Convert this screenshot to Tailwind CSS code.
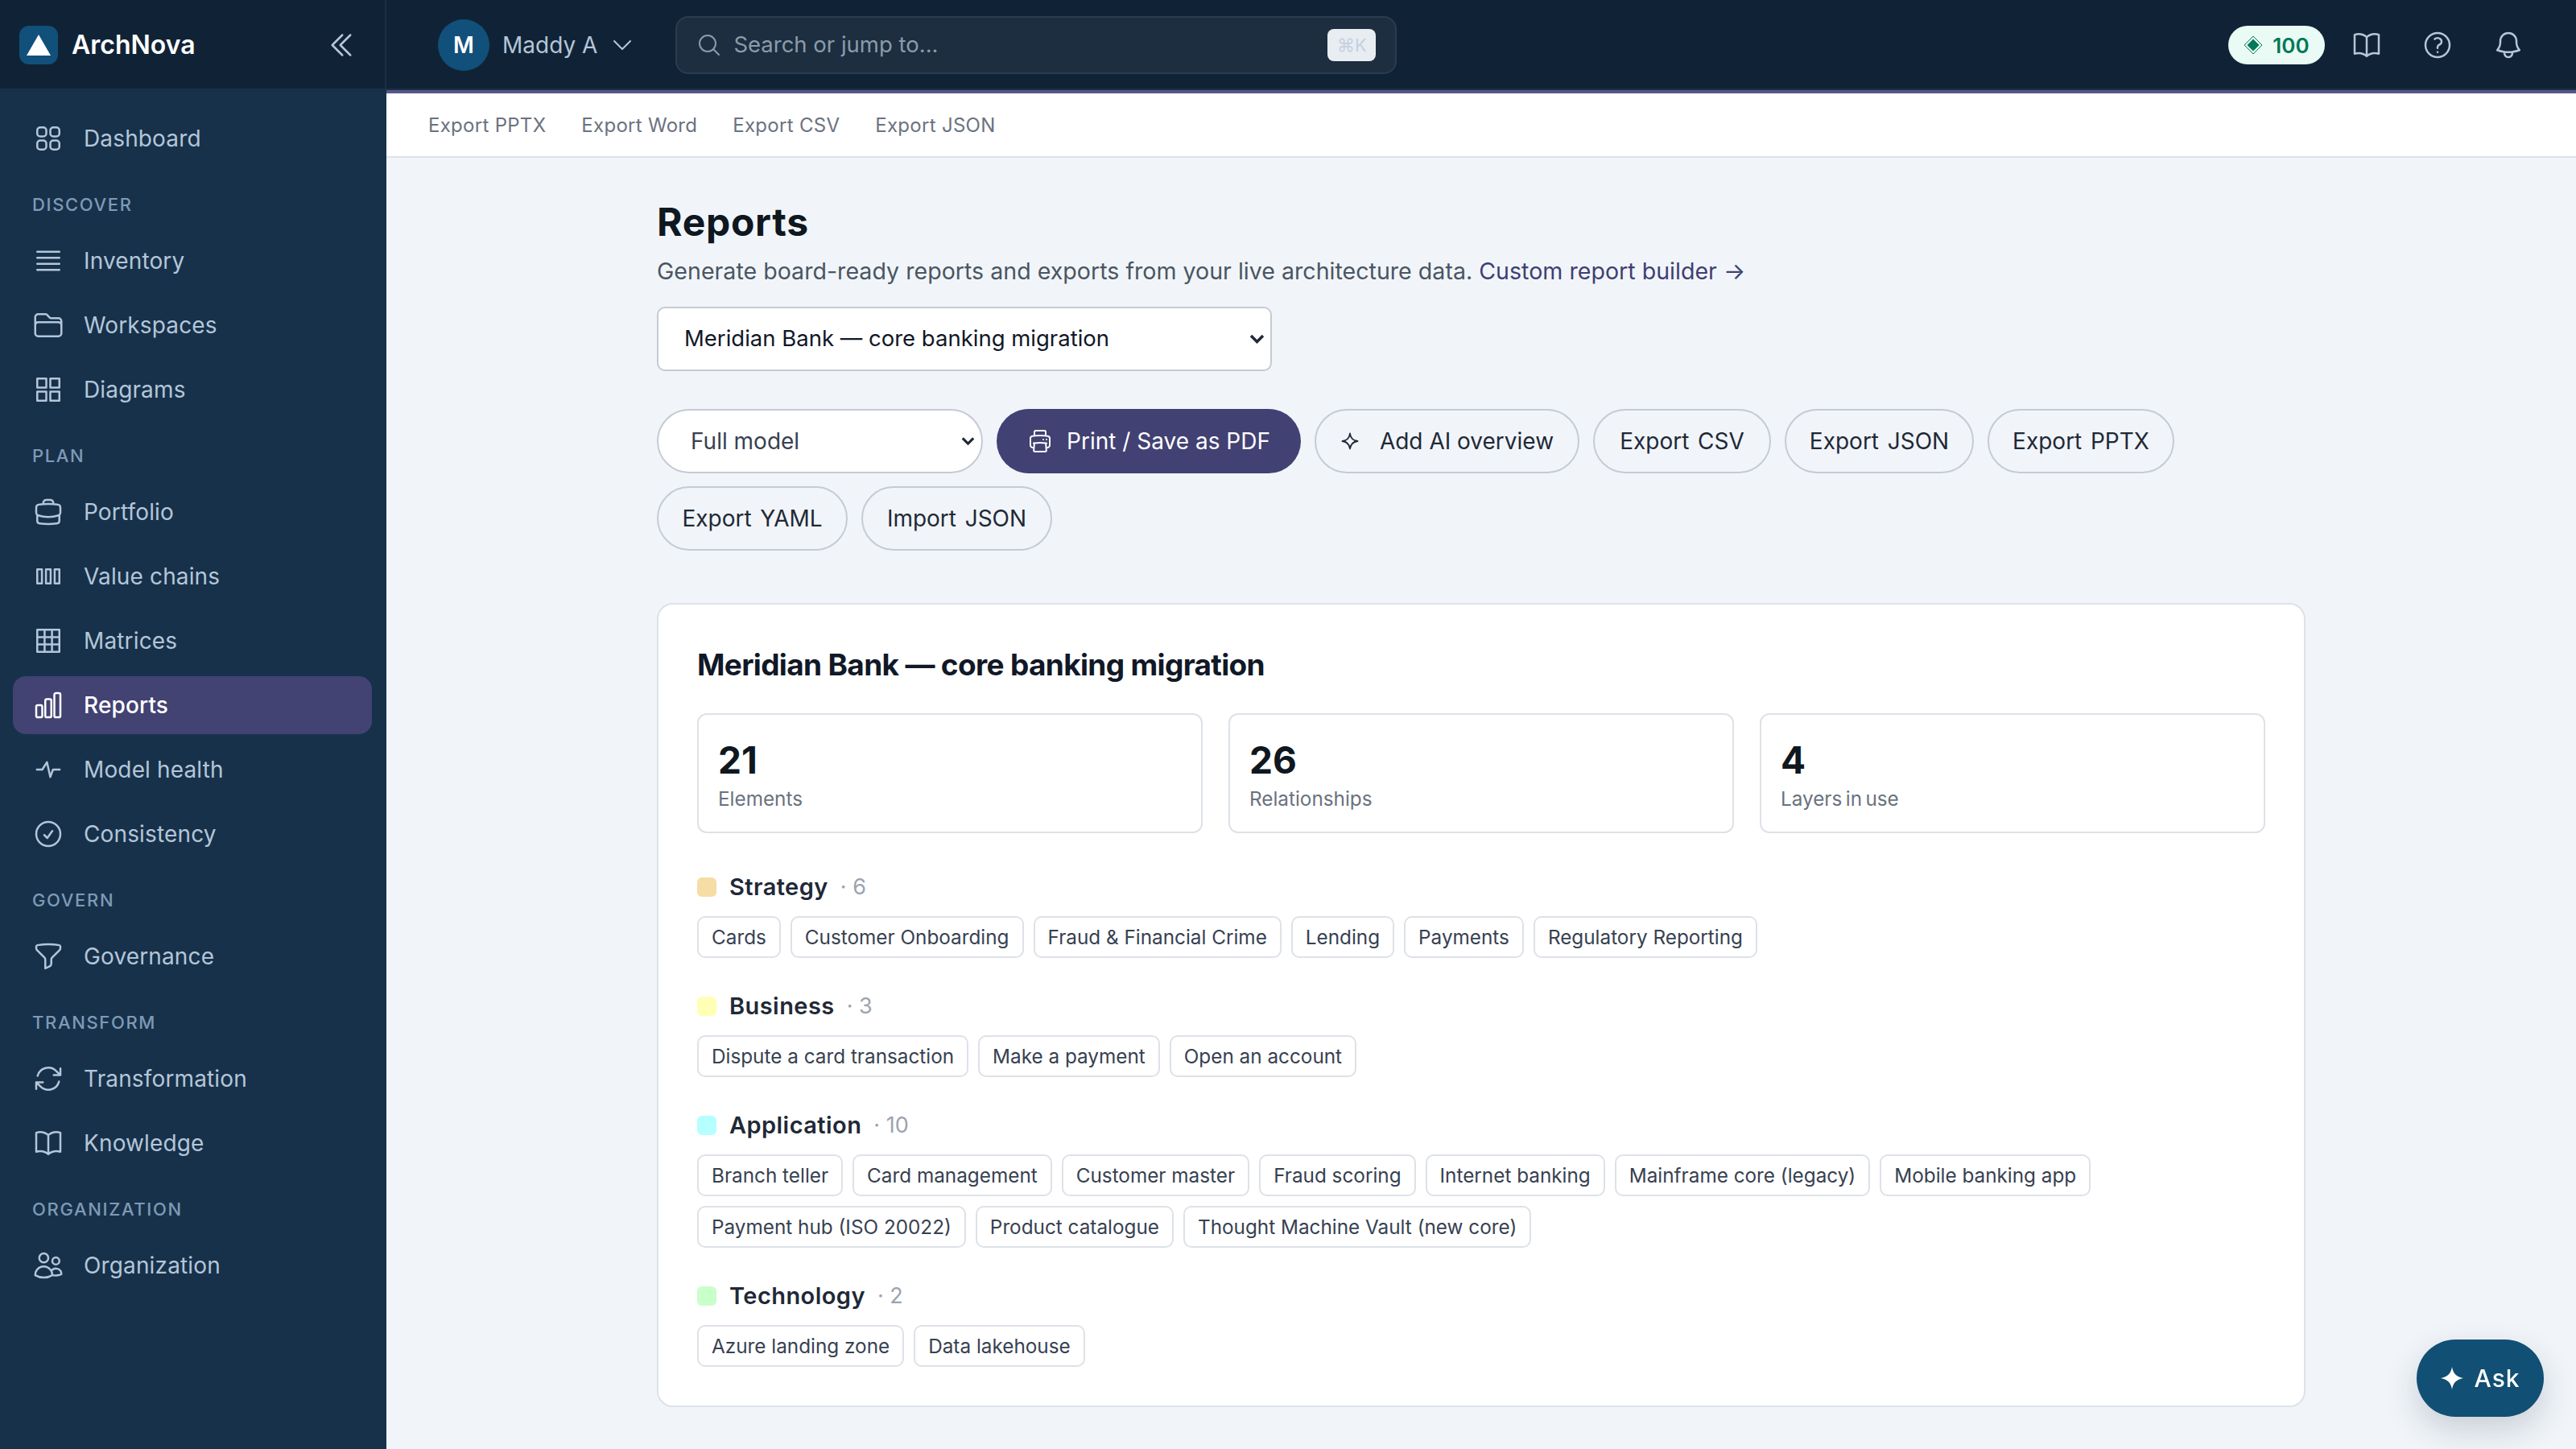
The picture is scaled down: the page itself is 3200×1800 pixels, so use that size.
<!DOCTYPE html>
<html lang="en">
	<head>
		<meta charset="UTF-8" />
		<meta name="viewport" content="width=device-width, initial-scale=1.0" />
		<title>ArchNova - Reports</title>
		<script src="https://cdn.jsdelivr.net/npm/@tailwindcss/browser@4"></script>
	</head>
	<body class="flex h-screen w-full overflow-hidden bg-[#f1f5f9] font-['Inter',sans-serif] text-[#111827]">
		<!-- Sidebar -->
		<aside class="flex h-full w-[480px] shrink-0 flex-col bg-[#17314b]">
			<div class="flex h-[112px] shrink-0 items-center border-r-2 border-b-2 border-[#1c3045] bg-[#102336] pt-0.5 pr-[34px] pl-6">
				<div class="flex size-12 items-center justify-center rounded-xl bg-[#11507a]">
					<svg class="h-[26px] w-[30px]" viewBox="0 0 30 26"><path fill="#fff" d="M15 0 30 26H0Z" /></svg>
				</div>
				<span class="ml-[17px] flex-1 text-[32px] font-semibold text-white">ArchNova</span>
				<svg class="size-10 text-[#b4c6d8]" fill="none" viewBox="0 0 24 24" stroke-width="1.5" stroke="currentColor"><path stroke-linecap="round" stroke-linejoin="round" d="m18.75 4.5-7.5 7.5 7.5 7.5m-6-15L5.25 12l7.5 7.5" /></svg>
			</div>
			<nav class="flex flex-col gap-2 pt-6 pr-[18px] pl-4 text-[28px] tracking-[0.005em] text-[#b4c6d8]">
				<a class="flex h-[72px] items-center gap-6 px-6">
					<svg class="size-10 shrink-0" fill="none" viewBox="0 0 24 24" stroke-width="1.5" stroke="currentColor"><path stroke-linecap="round" stroke-linejoin="round" d="M3.75 6A2.25 2.25 0 0 1 6 3.75h2.25A2.25 2.25 0 0 1 10.5 6v2.25a2.25 2.25 0 0 1-2.25 2.25H6a2.25 2.25 0 0 1-2.25-2.25V6ZM3.75 15.75A2.25 2.25 0 0 1 6 13.5h2.25a2.25 2.25 0 0 1 2.25 2.25V18a2.25 2.25 0 0 1-2.25 2.25H6A2.25 2.25 0 0 1 3.75 18v-2.25ZM13.5 6a2.25 2.25 0 0 1 2.25-2.25H18A2.25 2.25 0 0 1 20.25 6v2.25A2.25 2.25 0 0 1 18 10.5h-2.25a2.25 2.25 0 0 1-2.25-2.25V6ZM13.5 15.75a2.25 2.25 0 0 1 2.25-2.25H18a2.25 2.25 0 0 1 2.25 2.25V18A2.25 2.25 0 0 1 18 20.25h-2.25A2.25 2.25 0 0 1 13.5 18v-2.25Z" /></svg>
					Dashboard
				</a>
				<div class="px-6 pt-[22px] pb-[9px] text-[22px] leading-[33px] font-medium tracking-[0.075em] text-[#7f9ab5]">DISCOVER</div>
				<a class="flex h-[72px] items-center gap-6 px-6">
					<svg class="size-10 shrink-0" fill="none" viewBox="0 0 24 24" stroke-width="1.5" stroke="currentColor"><path stroke-linecap="round" stroke-linejoin="round" d="M3.75 5.25h16.5m-16.5 4.5h16.5m-16.5 4.5h16.5m-16.5 4.5h16.5" /></svg>
					Inventory
				</a>
				<a class="flex h-[72px] items-center gap-6 px-6">
					<svg class="size-10 shrink-0" fill="none" viewBox="0 0 24 24" stroke-width="1.5" stroke="currentColor"><path stroke-linecap="round" stroke-linejoin="round" d="M2.25 12.75V12A2.25 2.25 0 0 1 4.5 9.75h15A2.25 2.25 0 0 1 21.75 12v.75m-8.69-6.44-2.12-2.12a1.5 1.5 0 0 0-1.061-.44H4.5A2.25 2.25 0 0 0 2.25 6v12a2.25 2.25 0 0 0 2.25 2.25h15A2.25 2.25 0 0 0 21.75 18V9a2.25 2.25 0 0 0-2.25-2.25h-5.379a1.5 1.5 0 0 1-1.06-.44Z" /></svg>
					Workspaces
				</a>
				<a class="flex h-[72px] items-center gap-6 px-6">
					<svg class="size-10 shrink-0" fill="none" viewBox="0 0 24 24" stroke-width="1.5" stroke="currentColor"><path stroke-linejoin="round" d="M3.75 3.75h6.75v6.75H3.75ZM13.5 3.750h6.75v6.75H13.5ZM3.75 13.5h6.75v6.75H3.75ZM13.5 13.5h6.75v6.75H13.5Z" /></svg>
					Diagrams
				</a>
				<div class="px-6 pt-[22px] pb-[9px] text-[22px] leading-[33px] font-medium tracking-[0.075em] text-[#7f9ab5]">PLAN</div>
				<a class="flex h-[72px] items-center gap-6 px-6">
					<svg class="size-10 shrink-0" fill="none" viewBox="0 0 24 24" stroke-width="1.5" stroke="currentColor"><path stroke-linecap="round" stroke-linejoin="round" d="M20.25 14.15v4.25c0 1.094-.787 2.036-1.872 2.18-2.087.277-4.216.42-6.378.42s-4.291-.143-6.378-.42c-1.085-.144-1.872-1.086-1.872-2.18v-4.25m16.5 0a2.18 2.18 0 0 0 .75-1.661V8.706c0-1.081-.768-2.015-1.837-2.175a48.114 48.114 0 0 0-3.413-.387m4.5 8.006c-.194.165-.42.295-.673.38A23.978 23.978 0 0 1 12 15.75c-2.648 0-5.195-.429-7.577-1.22a2.016 2.016 0 0 1-.673-.38m0 0A2.18 2.18 0 0 1 3 12.489V8.706c0-1.081.768-2.015 1.837-2.175a48.111 48.111 0 0 1 3.413-.387m7.5 0V5.25A2.25 2.25 0 0 0 13.5 3h-3a2.25 2.25 0 0 0-2.25 2.25v.894m7.5 0a48.667 48.667 0 0 0-7.5 0" /></svg>
					Portfolio
				</a>
				<a class="flex h-[72px] items-center gap-6 px-6">
					<svg class="size-10 shrink-0" fill="none" viewBox="0 0 24 24" stroke-width="1.5" stroke="currentColor"><path stroke-linejoin="round" d="M3.75 6.75h3.5v10.5h-3.5ZM10.25 6.75h3.5v10.5h-3.5ZM16.75 6.75h3.5v10.5h-3.5Z" /></svg>
					Value chains
				</a>
				<a class="flex h-[72px] items-center gap-6 px-6">
					<svg class="size-10 shrink-0" fill="none" viewBox="0 0 24 24" stroke-width="1.5" stroke="currentColor"><path stroke-linejoin="round" d="M3.75 3.75h16.5v16.5H3.75ZM3.75 9.25h16.5M3.75 14.75h16.5M9.25 3.75v16.5M14.75 3.75v16.5" /></svg>
					Matrices
				</a>
				<a class="flex h-[72px] items-center gap-6 rounded-2xl bg-[#424273] px-6 font-medium text-white">
					<svg class="size-10 shrink-0" fill="none" viewBox="0 0 24 24" stroke-width="1.5" stroke="currentColor"><path stroke-linecap="round" stroke-linejoin="round" d="M3 13.125C3 12.504 3.504 12 4.125 12h2.25c.621 0 1.125.504 1.125 1.125v6.75C7.5 20.496 6.996 21 6.375 21h-2.25A1.125 1.125 0 0 1 3 19.875v-6.75ZM9.75 8.625c0-.621.504-1.125 1.125-1.125h2.25c.621 0 1.125.504 1.125 1.125v11.25c0 .621-.504 1.125-1.125 1.125h-2.25a1.125 1.125 0 0 1-1.125-1.125V8.625ZM16.5 4.125c0-.621.504-1.125 1.125-1.125h2.25C20.496 3 21 3.504 21 4.125v15.75c0 .621-.504 1.125-1.125 1.125h-2.25a1.125 1.125 0 0 1-1.125-1.125V4.125Z" /></svg>
					Reports
				</a>
				<a class="flex h-[72px] items-center gap-6 px-6">
					<svg class="size-10 shrink-0" fill="none" viewBox="0 0 24 24" stroke-width="1.5" stroke="currentColor"><path stroke-linecap="round" stroke-linejoin="round" d="M3.5 12h4L11 6.5l2.500 11 2-5.500h5" /></svg>
					Model health
				</a>
				<a class="flex h-[72px] items-center gap-6 px-6">
					<svg class="size-10 shrink-0" fill="none" viewBox="0 0 24 24" stroke-width="1.5" stroke="currentColor"><path stroke-linecap="round" stroke-linejoin="round" d="M9 12.75 11.25 15 15 9.75M21 12a9 9 0 1 1-18 0 9 9 0 0 1 18 0Z" /></svg>
					Consistency
				</a>
				<div class="px-6 pt-[22px] pb-[9px] text-[22px] leading-[33px] font-medium tracking-[0.075em] text-[#7f9ab5]">GOVERN</div>
				<a class="flex h-[72px] items-center gap-6 px-6">
					<svg class="size-10 shrink-0" fill="none" viewBox="0 0 24 24" stroke-width="1.5" stroke="currentColor"><path stroke-linecap="round" stroke-linejoin="round" d="M12 3c2.755 0 5.455.232 8.083.678.533.09.917.556.917 1.096v1.044a2.25 2.25 0 0 1-.659 1.591l-5.432 5.432a2.25 2.25 0 0 0-.659 1.591v2.927a2.25 2.25 0 0 1-1.244 2.013L9.75 21v-6.568a2.25 2.25 0 0 0-.659-1.591L3.659 7.409A2.25 2.25 0 0 1 3 5.818V4.774c0-.54.384-1.006.917-1.096A48.32 48.32 0 0 1 12 3Z" /></svg>
					Governance
				</a>
				<div class="px-6 pt-[22px] pb-[9px] text-[22px] leading-[33px] font-medium tracking-[0.075em] text-[#7f9ab5]">TRANSFORM</div>
				<a class="flex h-[72px] items-center gap-6 px-6">
					<svg class="size-10 shrink-0" fill="none" viewBox="0 0 24 24" stroke-width="1.5" stroke="currentColor"><path stroke-linecap="round" stroke-linejoin="round" d="M16.023 9.348h4.992v-.001M2.985 19.644v-4.992m0 0h4.992m-4.993 0 3.181 3.183a8.25 8.25 0 0 0 13.803-3.7M4.031 9.865a8.25 8.25 0 0 1 13.803-3.7l3.181 3.182m0-4.991v4.99" /></svg>
					Transformation
				</a>
				<a class="flex h-[72px] items-center gap-6 px-6">
					<svg class="size-10 shrink-0" fill="none" viewBox="0 0 24 24" stroke-width="1.5" stroke="currentColor"><path stroke-linecap="round" stroke-linejoin="round" d="M12 6.042A8.967 8.967 0 0 0 6 3.75c-1.052 0-2.062.18-3 .512v14.25A8.987 8.987 0 0 1 6 18c2.305 0 4.408.867 6 2.292m0-14.25a8.966 8.966 0 0 1 6-2.292c1.052 0 2.062.18 3 .512v14.25A8.987 8.987 0 0 0 18 18a8.967 8.967 0 0 0-6 2.292m0-14.25v14.25" /></svg>
					Knowledge
				</a>
				<div class="px-6 pt-[22px] pb-[9px] text-[22px] leading-[33px] font-medium tracking-[0.075em] text-[#7f9ab5]">ORGANIZATION</div>
				<a class="flex h-[72px] items-center gap-6 px-6">
					<svg class="size-10 shrink-0" fill="none" viewBox="0 0 24 24" stroke-width="1.5" stroke="currentColor"><path stroke-linecap="round" stroke-linejoin="round" d="M15 19.128a9.38 9.38 0 0 0 2.625.372 9.337 9.337 0 0 0 4.121-.952 4.125 4.125 0 0 0-7.533-2.493M15 19.128v-.003c0-1.113-.285-2.16-.786-3.07M15 19.128v.106A12.318 12.318 0 0 1 8.624 21c-2.331 0-4.512-.645-6.374-1.766l-.001-.109a6.375 6.375 0 0 1 11.964-3.07M12 6.375a3.375 3.375 0 1 1-6.75 0 3.375 3.375 0 0 1 6.75 0Zm8.25 2.25a2.625 2.625 0 1 1-5.25 0 2.625 2.625 0 0 1 5.25 0Z" /></svg>
					Organization
				</a>
			</nav>
		</aside>

		<div class="flex min-w-0 flex-1 flex-col">
			<!-- Top bar -->
			<header class="flex h-[116px] shrink-0 items-center border-b-4 border-[#57578a] bg-[#102336] pr-[64px] pl-16 shadow-[inset_0_-2px_0_#1c3045]">
				<div class="flex size-16 items-center justify-center rounded-full bg-[#11507a] text-[28px] font-semibold text-white">M</div>
				<span class="ml-4 text-[28px] text-[#b4c6d8]">Maddy A</span>
				<svg class="ml-[15px] size-8 text-[#b4c6d8]" fill="none" viewBox="0 0 24 24" stroke-width="1.5" stroke="currentColor"><path stroke-linecap="round" stroke-linejoin="round" d="m19.5 8.25-7.5 7.5-7.5-7.5" /></svg>
				<div class="ml-[50px] flex h-[72px] w-[896px] items-center rounded-2xl border-2 border-[#2a3c50] bg-[#1c2e40] pr-6 pl-6">
					<svg class="size-8 shrink-0 text-[#8b9bab]" fill="none" viewBox="0 0 24 24" stroke-width="1.5" stroke="currentColor"><path stroke-linecap="round" stroke-linejoin="round" d="m21 21-5.197-5.197m0 0A7.5 7.500 0 1 0 5.196 5.196a7.5 7.500 0 0 0 10.607 10.607Z" /></svg>
					<span class="ml-[14px] flex-1 text-[27.5px] text-[#8b9bab]">Search or jump to...</span>
					<span class="flex h-10 w-[60px] items-center justify-center rounded-lg bg-[#e8edf2] text-[22px] text-[#c3d1df]">⌘K</span>
				</div>
				<div class="ml-auto flex h-12 w-[120px] items-center justify-center gap-3 rounded-full bg-[#e9fbf4] text-[26px] font-semibold text-[#047857]">
					<svg class="size-6" viewBox="0 0 24 24"><path fill="none" stroke="currentColor" stroke-width="1" d="M12 1 23 12 12 23 1 12Z" /><path fill="currentColor" d="M12 4.5 19.5 12 12 19.5 4.5 12Z" /></svg>
					100
				</div>
				<div class="ml-[32px] flex items-center gap-[48px] text-[#b4c6d8]">
					<svg class="size-10" fill="none" viewBox="0 0 24 24" stroke-width="1.5" stroke="currentColor"><path stroke-linecap="round" stroke-linejoin="round" d="M12 6.042A8.967 8.967 0 0 0 6 3.75c-1.052 0-2.062.18-3 .512v14.25A8.987 8.987 0 0 1 6 18c2.305 0 4.408.867 6 2.292m0-14.25a8.966 8.966 0 0 1 6-2.292c1.052 0 2.062.18 3 .512v14.25A8.987 8.987 0 0 0 18 18a8.967 8.967 0 0 0-6 2.292m0-14.25v14.25" /></svg>
					<svg class="size-10" fill="none" viewBox="0 0 24 24" stroke-width="1.5" stroke="currentColor"><path stroke-linecap="round" stroke-linejoin="round" d="M9.879 7.519c1.171-1.025 3.071-1.025 4.242 0 1.172 1.025 1.172 2.687 0 3.712-.203.179-.43.326-.67.442-.745.361-1.45.999-1.45 1.827v.75M21 12a9 9 0 1 1-18 0 9 9 0 0 1 18 0Zm-9 5.25h.008v.008H12v-.008Z" /></svg>
					<svg class="size-10" fill="none" viewBox="0 0 24 24" stroke-width="1.5" stroke="currentColor"><path stroke-linecap="round" stroke-linejoin="round" d="M14.857 17.082a23.848 23.848 0 0 0 5.454-1.31A8.967 8.967 0 0 1 18 9.75V9A6 6 0 0 0 6 9v.75a8.967 8.967 0 0 1-2.312 6.022c1.733.64 3.56 1.085 5.455 1.31m5.714 0a24.255 24.255 0 0 1-5.714 0m5.714 0a3 3 0 1 1-5.714 0" /></svg>
				</div>
			</header>

			<!-- Sub nav -->
			<div class="flex h-[80px] shrink-0 items-center gap-[44px] border-b-2 border-[#dfe2e6] bg-white pt-0.5 pl-[52px] text-[24px] tracking-[0.012em] text-[#6b7280]">
				<a>Export PPTX</a>
				<a>Export Word</a>
				<a>Export CSV</a>
				<a>Export JSON</a>
			</div>

			<main class="min-h-0 flex-1 pt-[50px]">
				<div class="mx-auto w-[2048px]">
					<h1 class="text-[48px] leading-[60px] font-bold tracking-[0.015em] text-[#0f1720]">Reports</h1>
					<p class="mt-2 text-[28.6px] leading-[45px] text-[#4b5563]">
						Generate board-ready reports and exports from your live architecture data.
						<a class="text-[#3f3f74]">Custom report builder →</a>
					</p>
					<div class="relative mt-[22px] w-[764px]">
						<select class="block h-[80px] w-full appearance-none rounded-[10px] border-2 border-[#c5cbd3] bg-white pl-[32px] text-[27.5px] text-[#111827]">
							<option>Meridian Bank — core banking migration</option>
						</select>
						<svg class="absolute top-[34px] right-[9px] h-3 w-[19px] text-[#1f2937]" fill="none" viewBox="0 0 19 12" stroke-width="3.5" stroke="currentColor"><path d="M2 2l7.5 7.500L17 2" /></svg>
					</div>

					<div class="mt-[47px] flex flex-wrap gap-x-[17px] gap-y-4 text-[28px] text-[#1f2937]">
						<div class="relative w-[405px]">
							<select class="block h-[80px] w-full appearance-none rounded-full border-2 border-[#c5cbd3] bg-white pl-[40px] text-[28px] text-[#374151]">
								<option>Full model</option>
							</select>
							<svg class="absolute top-[34px] right-[10px] h-3 w-[17px] text-[#1f2937]" fill="none" viewBox="0 0 19 12" stroke-width="3.5" stroke="currentColor"><path d="M2 2l7.5 7.500L17 2" /></svg>
						</div>
						<button class="flex h-[80px] w-[378px] items-center justify-center gap-[17px] rounded-full bg-[#414173] text-white">
							<svg class="size-8" fill="none" viewBox="0 0 24 24" stroke-width="1.5" stroke="currentColor"><path stroke-linecap="round" stroke-linejoin="round" d="M6.72 13.829c-.24.03-.48.062-.72.096m.72-.096a42.415 42.415 0 0 1 10.56 0m-10.56 0L6.34 18m10.94-4.171c.24.03.48.062.72.096m-.72-.096L17.66 18m0 0 .229 2.523a1.125 1.125 0 0 1-1.12 1.227H7.231c-.662 0-1.18-.568-1.12-1.227L6.34 18m11.318 0h1.091A2.25 2.25 0 0 0 21 15.75V9.456c0-1.081-.768-2.015-1.837-2.175a48.055 48.055 0 0 0-1.913-.247M6.34 18H5.25A2.25 2.25 0 0 1 3 15.75V9.456c0-1.081.768-2.015 1.837-2.175a48.041 48.041 0 0 1 1.913-.247m10.5 0a48.536 48.536 0 0 0-10.5 0m10.5 0V3.375c0-.621-.504-1.125-1.125-1.125h-8.25c-.621 0-1.125.504-1.125 1.125v3.659M18 10.5h.008v.008H18V10.5Zm-3 0h.008v.008H15V10.5Z" /></svg>
							Print / Save as PDF
						</button>
						<button class="flex h-[80px] w-[329px] items-center justify-center gap-[25px] rounded-full border-2 border-[#c5cbd3]">
							<svg class="size-6" fill="none" viewBox="0 0 24 24" stroke-width="1.8" stroke="currentColor"><path stroke-linejoin="round" d="M12 2.5c.8 6 3.5 8.7 9.5 9.5-6 .8-8.7 3.5-9.500 9.500-.8-6-3.500-8.700-9.500-9.500 6-.8 8.700-3.500 9.500-9.500Z" /></svg>
							Add AI overview
						</button>
						<button class="h-[80px] w-[221px] rounded-full border-2 border-[#c5cbd3] [word-spacing:0.1em]">Export CSV</button>
						<button class="h-[80px] w-[235px] rounded-full border-2 border-[#c5cbd3] [word-spacing:0.1em]">Export JSON</button>
						<button class="h-[80px] w-[232px] rounded-full border-2 border-[#c5cbd3] [word-spacing:0.1em]">Export PPTX</button>
						<button class="h-[80px] w-[237px] rounded-full border-2 border-[#c5cbd3] [word-spacing:0.1em]">Export YAML</button>
						<button class="h-[80px] w-[237px] rounded-full border-2 border-[#c5cbd3] [word-spacing:0.1em]">Import JSON</button>
					</div>

					<!-- Report card -->
					<section class="mt-[65px] rounded-[20px] border-2 border-[#dde2e8] bg-white px-[48px] pt-[46px] pb-[48px]">
						<h2 class="text-[37px] leading-[57px] font-bold tracking-[-0.018em] text-[#111827]">Meridian Bank — core banking migration</h2>
						<div class="mt-8 grid grid-cols-3 gap-8">
							<div class="h-[149px] rounded-xl border-2 border-[#dde2e8] px-6 pt-[26px]">
								<div class="text-[46px] leading-[60px] font-bold text-[#0f1720]">21</div>
								<div class="text-[24.3px] leading-[37px] text-[#6b7280]">Elements</div>
							</div>
							<div class="h-[149px] rounded-xl border-2 border-[#dde2e8] px-6 pt-[26px]">
								<div class="text-[46px] leading-[60px] font-bold text-[#0f1720]">26</div>
								<div class="text-[24.3px] leading-[37px] text-[#6b7280]">Relationships</div>
							</div>
							<div class="h-[149px] rounded-xl border-2 border-[#dde2e8] px-6 pt-[26px]">
								<div class="text-[46px] leading-[60px] font-bold text-[#0f1720]">4</div>
								<div class="text-[24.3px] leading-[37px] text-[#6b7280] [word-spacing:-0.1em]">Layers in use</div>
							</div>
						</div>

						<div class="mt-[49px] flex flex-col gap-[42px]">
							<div>
								<div class="flex h-9 items-center text-[29px]">
									<span class="size-6 rounded-md bg-[#f6dca5]"></span>
									<span class="ml-4 font-semibold tracking-[0.015em] text-[#1f2937]">Strategy</span>
									<span class="ml-[15px] text-[27px] text-[#9ca3af]">· 6</span>
								</div>
								<div class="mt-[18px] flex flex-wrap gap-3 text-[24.3px] text-[#374151]">
									<span class="flex h-[52px] items-center rounded-[10px] border-2 border-[#dde2e8] px-4">Cards</span>
									<span class="flex h-[52px] items-center rounded-[10px] border-2 border-[#dde2e8] px-4">Customer Onboarding</span>
									<span class="flex h-[52px] items-center rounded-[10px] border-2 border-[#dde2e8] px-4">Fraud &amp; Financial Crime</span>
									<span class="flex h-[52px] items-center rounded-[10px] border-2 border-[#dde2e8] px-4">Lending</span>
									<span class="flex h-[52px] items-center rounded-[10px] border-2 border-[#dde2e8] px-4">Payments</span>
									<span class="flex h-[52px] items-center rounded-[10px] border-2 border-[#dde2e8] px-4">Regulatory Reporting</span>
								</div>
							</div>
							<div>
								<div class="flex h-9 items-center text-[29px]">
									<span class="size-6 rounded-md bg-[#ffffb5]"></span>
									<span class="ml-4 font-semibold tracking-[0.015em] text-[#1f2937]">Business</span>
									<span class="ml-[15px] text-[27px] text-[#9ca3af]">· 3</span>
								</div>
								<div class="mt-[18px] flex flex-wrap gap-3 text-[24.3px] text-[#374151]">
									<span class="flex h-[52px] items-center rounded-[10px] border-2 border-[#dde2e8] px-4">Dispute a card transaction</span>
									<span class="flex h-[52px] items-center rounded-[10px] border-2 border-[#dde2e8] px-4">Make a payment</span>
									<span class="flex h-[52px] items-center rounded-[10px] border-2 border-[#dde2e8] px-4">Open an account</span>
								</div>
							</div>
							<div>
								<div class="flex h-9 items-center text-[29px]">
									<span class="size-6 rounded-md bg-[#b5ffff]"></span>
									<span class="ml-4 font-semibold tracking-[0.015em] text-[#1f2937]">Application</span>
									<span class="ml-[15px] text-[27px] text-[#9ca3af]">· 10</span>
								</div>
								<div class="mt-[18px] flex flex-wrap gap-3 text-[24.3px] text-[#374151]">
									<span class="flex h-[52px] items-center rounded-[10px] border-2 border-[#dde2e8] px-4">Branch teller</span>
									<span class="flex h-[52px] items-center rounded-[10px] border-2 border-[#dde2e8] px-4">Card management</span>
									<span class="flex h-[52px] items-center rounded-[10px] border-2 border-[#dde2e8] px-4">Customer master</span>
									<span class="flex h-[52px] items-center rounded-[10px] border-2 border-[#dde2e8] px-4">Fraud scoring</span>
									<span class="flex h-[52px] items-center rounded-[10px] border-2 border-[#dde2e8] px-4">Internet banking</span>
									<span class="flex h-[52px] items-center rounded-[10px] border-2 border-[#dde2e8] px-4">Mainframe core (legacy)</span>
									<span class="flex h-[52px] items-center rounded-[10px] border-2 border-[#dde2e8] px-4">Mobile banking app</span>
									<span class="flex h-[52px] items-center rounded-[10px] border-2 border-[#dde2e8] px-4">Payment hub (ISO 20022)</span>
									<span class="flex h-[52px] items-center rounded-[10px] border-2 border-[#dde2e8] px-4">Product catalogue</span>
									<span class="flex h-[52px] items-center rounded-[10px] border-2 border-[#dde2e8] px-4">Thought Machine Vault (new core)</span>
								</div>
							</div>
							<div>
								<div class="flex h-9 items-center text-[29px]">
									<span class="size-6 rounded-md bg-[#c9ffc9]"></span>
									<span class="ml-4 font-semibold tracking-[0.015em] text-[#1f2937]">Technology</span>
									<span class="ml-[15px] text-[27px] text-[#9ca3af]">· 2</span>
								</div>
								<div class="mt-[18px] flex flex-wrap gap-3 text-[24.3px] text-[#374151]">
									<span class="flex h-[52px] items-center rounded-[10px] border-2 border-[#dde2e8] px-4">Azure landing zone</span>
									<span class="flex h-[52px] items-center rounded-[10px] border-2 border-[#dde2e8] px-4">Data lakehouse</span>
								</div>
							</div>
						</div>
					</section>
				</div>
			</main>
		</div>

		<!-- Ask button -->
		<button class="fixed right-10 bottom-10 flex h-24 w-[158px] items-center justify-center gap-[14px] rounded-full bg-[#114f74] text-[30px] font-medium tracking-[0.03em] text-white shadow-[0_16px_40px_rgba(15,35,55,0.18)]">
			<svg class="size-7" viewBox="0 0 24 24"><path fill="#fff" d="M12 0c1.3 7.2 4.6 10.7 12 12-7.4 1.3-10.7 4.8-12 12-1.3-7.2-4.6-10.7-12-12C7.4 10.700 10.700 7.200 12 0Z" /></svg>
			Ask
		</button>
	</body>
</html>
